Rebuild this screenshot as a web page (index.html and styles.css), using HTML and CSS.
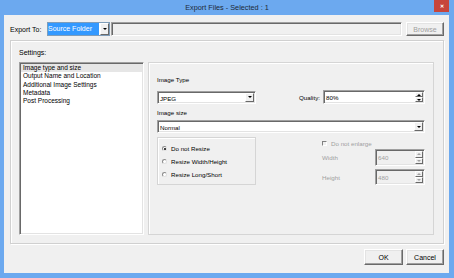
FILE: index.html
```html
<!DOCTYPE html>
<html lang="en">
<head>
    <meta charset="UTF-8">
    <title>Export Files</title>
    <link rel="stylesheet" href="styles.css">
</head>
<body>
    <div class="window">
        <div class="titlebar">
            <span class="title">Export Files - Selected : 1</span>
            <span class="close">&#x2715;</span>
        </div>

        <div class="client">
            <div class="export-row">
                <span class="export-label">Export To:</span>
                <div class="combo-source">
                    <span class="combo-selected">Source Folder</span>
                    <span class="drop-btn"><i class="arrow-down"></i></span>
                </div>
                <div class="path-field sunken"></div>
                <button class="btn btn-browse">Browse</button>
            </div>

            <div class="settings-group">
                <div class="group-label">Settings:</div>
                <div class="settings-body">
                    <ul class="settings-list sunken">
                        <li class="selected">Image type and size</li>
                        <li>Output Name and Location</li>
                        <li>Additional Image Settings</li>
                        <li>Metadata</li>
                        <li>Post Processing</li>
                    </ul>

                    <div class="panel">
                        <div class="field-label">Image Type</div>
                        <div class="row-type">
                            <div class="select select-type sunken">
                                <span class="select-text">JPEG</span>
                                <span class="drop-btn"><i class="arrow-down"></i></span>
                            </div>
                            <div class="quality">
                                <span class="quality-label">Quality:</span>
                                <div class="spin spin-quality sunken">
                                    <span class="spin-text">80%</span>
                                    <span class="spin-btns">
                                        <span class="spin-btn"><i class="arrow-up"></i></span>
                                        <span class="spin-btn"><i class="arrow-down"></i></span>
                                    </span>
                                </div>
                            </div>
                        </div>

                        <div class="field-label label-size">Image size</div>
                        <div class="select select-size sunken">
                            <span class="select-text">Normal</span>
                            <span class="drop-btn"><i class="arrow-down"></i></span>
                        </div>

                        <div class="row-resize">
                            <div class="radio-box">
                                <div class="radio-item"><span class="radio checked"></span>Do not Resize</div>
                                <div class="radio-item"><span class="radio"></span>Resize Width/Height</div>
                                <div class="radio-item"><span class="radio"></span>Resize Long/Short</div>
                            </div>

                            <div class="dims">
                                <div class="check-item"><span class="checkbox"></span>Do not enlarge</div>
                                <div class="dim-row dim-width">
                                    <span class="dim-label">Width</span>
                                    <div class="spin spin-dim sunken">
                                        <span class="spin-text">640</span>
                                        <span class="spin-btns">
                                            <span class="spin-btn"><i class="arrow-up"></i></span>
                                            <span class="spin-btn"><i class="arrow-down"></i></span>
                                        </span>
                                    </div>
                                </div>
                                <div class="dim-row dim-height">
                                    <span class="dim-label">Height</span>
                                    <div class="spin spin-dim sunken">
                                        <span class="spin-text">480</span>
                                        <span class="spin-btns">
                                            <span class="spin-btn"><i class="arrow-up"></i></span>
                                            <span class="spin-btn"><i class="arrow-down"></i></span>
                                        </span>
                                    </div>
                                </div>
                            </div>
                        </div>
                    </div>
                </div>
            </div>

            <div class="button-row">
                <button class="btn btn-ok">OK</button>
                <button class="btn btn-cancel">Cancel</button>
            </div>
        </div>
    </div>
</body>
</html>
```

FILE: styles.css
```css
* {
    box-sizing: border-box;
}

body {
    margin: 0;
    font-family: 'Liberation Sans', Arial, sans-serif;
    font-size: 6.5px;
    color: #000;
    background: #fff;
}

.window {
    width: 454px;
    height: 278px;
    background: #6ca9ef;
    display: flex;
    flex-direction: column;
}

.titlebar {
    height: 15px;
    display: flex;
    align-items: center;
    justify-content: center;
    position: relative;
}

.title {
    font-size: 7.3px;
    color: #1e2a38;
    margin-top: -1px;
}

.close {
    position: absolute;
    right: 5px;
    top: 0;
    width: 15px;
    height: 12px;
    background: #c7453b;
    color: #fff;
    font-size: 5px;
    font-weight: bold;
    display: flex;
    align-items: center;
    justify-content: center;
}

.client {
    flex: 1;
    margin: 0 5px 5px 4px;
    background: #f0f0f0;
    padding: 7px 5px 0 6px;
    display: flex;
    flex-direction: column;
}

/* 3D borders */
.sunken {
    border: 1px solid;
    border-color: #a0a0a0 #fff #fff #a0a0a0;
    box-shadow: inset 1px 1px #696969, inset -1px -1px #e3e3e3;
}

.btn {
    font-family: 'Liberation Sans', Arial, sans-serif;
    font-size: 7px;
    background: #f0f0f0;
    border: 1px solid;
    border-color: #fff #696969 #696969 #fff;
    box-shadow: inset -1px -1px #a0a0a0, inset 1px 1px #e3e3e3;
    padding: 0;
    color: #000;
}

/* export row */
.export-row {
    display: flex;
    align-items: center;
    height: 14px;
}

.export-label {
    width: 32px;
    margin-right: 5px;
    font-size: 7px;
}

.combo-source {
    width: 63px;
    height: 14px;
    display: flex;
    border: 1px solid #7f9db9;
    background: #fff;
    padding: 0;
}

.combo-selected {
    flex: 1;
    background: #3399ff;
    color: #fff;
    font-size: 7px;
    line-height: 12px;
    padding-left: 0;
}

.drop-btn {
    width: 9px;
    display: flex;
    align-items: center;
    justify-content: center;
    background: #f0f0f0;
    border: 1px solid;
    border-color: #fff #696969 #696969 #fff;
}

.combo-source .drop-btn {
    margin-left: 1px;
}

.arrow-down {
    width: 0;
    height: 0;
    border-left: 2px solid transparent;
    border-right: 2px solid transparent;
    border-top: 2px solid #000;
}

.arrow-up {
    width: 0;
    height: 0;
    border-left: 2px solid transparent;
    border-right: 2px solid transparent;
    border-bottom: 2px solid #000;
}

.path-field {
    flex: 1;
    height: 14px;
    margin-left: 1px;
}

.btn-browse {
    width: 38px;
    height: 14px;
    margin-left: 4px;
    color: #a0a0a0;
}

/* settings group */
.settings-group {
    margin-top: 4px;
    height: 204px;
    border: 1px solid #d0d0d0;
    box-shadow: inset 1px 1px #fff, 1px 1px #fff;
    padding: 7px 9px 8px 8px;
    display: flex;
    flex-direction: column;
}

.group-label {
    height: 10px;
    line-height: 10px;
    font-size: 7px;
    margin-bottom: 4px;
}

.settings-body {
    flex: 1;
    display: flex;
    gap: 4px;
}

.settings-list {
    width: 125px;
    margin: 0;
    padding: 1px 1px;
    list-style: none;
    background: #fff;
}

.settings-list li {
    height: 8.3px;
    line-height: 8.3px;
    padding-left: 2px;
}

.settings-list li.selected {
    background: #e6e6e6;
}

.panel {
    flex: 1;
    border: 1px solid #d5d5d5;
    box-shadow: inset 1px 1px #fff;
    padding: 13px 8px 0 8px;
    font-size: 6.2px;
}

.field-label {
    height: 8px;
    line-height: 8px;
    margin-bottom: 6px;
}

.label-size {
    margin-top: 5px;
    margin-bottom: 3px;
}

.row-type {
    display: flex;
    justify-content: space-between;
    align-items: center;
    height: 14px;
}

.select {
    display: flex;
    background: #fff;
    padding: 1px;
}

.select-text {
    flex: 1;
    line-height: 11px;
    padding-left: 1px;
}

.select-type {
    width: 99px;
    height: 13px;
}

.select-size {
    height: 13px;
}

.quality {
    display: flex;
    align-items: center;
}

.quality-label {
    margin-right: 3px;
}

.spin {
    display: flex;
    background: #fff;
    padding: 1px;
}

.spin-text {
    flex: 1;
    padding-left: 1px;
    display: flex;
    align-items: center;
}

.spin-quality {
    width: 102px;
    height: 14px;
}

.spin-btns {
    width: 8px;
    display: flex;
    flex-direction: column;
}

.spin-btn {
    flex: 1;
    display: flex;
    align-items: center;
    justify-content: center;
    background: #f0f0f0;
    border: 1px solid;
    border-color: #fff #696969 #696969 #fff;
}

/* resize options */
.row-resize {
    margin-top: 4px;
    display: flex;
    justify-content: space-between;
}

.radio-box {
    width: 99px;
    height: 48px;
    border: 1px solid #d5d5d5;
    box-shadow: inset 1px 1px #fff;
    padding: 4px 0 0 4px;
}

.radio-item {
    height: 13px;
    display: flex;
    align-items: center;
}

.radio {
    width: 5px;
    height: 5px;
    border-radius: 50%;
    border: 1px solid #8a8a8a;
    border-right-color: #e0e0e0;
    border-bottom-color: #e0e0e0;
    background: #fff;
    margin-right: 4px;
    position: relative;
}

.radio.checked::after {
    content: '';
    position: absolute;
    left: 0.5px;
    top: 0.5px;
    width: 2px;
    height: 2px;
    border-radius: 50%;
    background: #000;
}

.dims {
    width: 103px;
    color: #a0a0a0;
}

.check-item {
    height: 12px;
    display: flex;
    align-items: center;
}

.checkbox {
    width: 5px;
    height: 5px;
    border: 1px solid;
    border-color: #808080 #fff #fff #808080;
    background: #f0f0f0;
    margin-right: 4px;
}

.dim-row {
    display: flex;
    align-items: center;
    justify-content: space-between;
}

.dim-width {
    height: 17px;
}

.dim-height {
    margin-top: 3px;
    height: 16px;
}

.spin-dim {
    width: 50px;
    height: 100%;
    background: #f0f0f0;
}

.spin-dim .arrow-up {
    border-bottom-color: #a0a0a0;
}

.spin-dim .arrow-down {
    border-top-color: #a0a0a0;
}

/* dialog buttons */
.button-row {
    margin-top: 5px;
    display: flex;
    justify-content: flex-end;
    gap: 3px;
}

.btn-ok {
    width: 39px;
    height: 16px;
}

.btn-cancel {
    width: 38px;
    height: 16px;
}
```
